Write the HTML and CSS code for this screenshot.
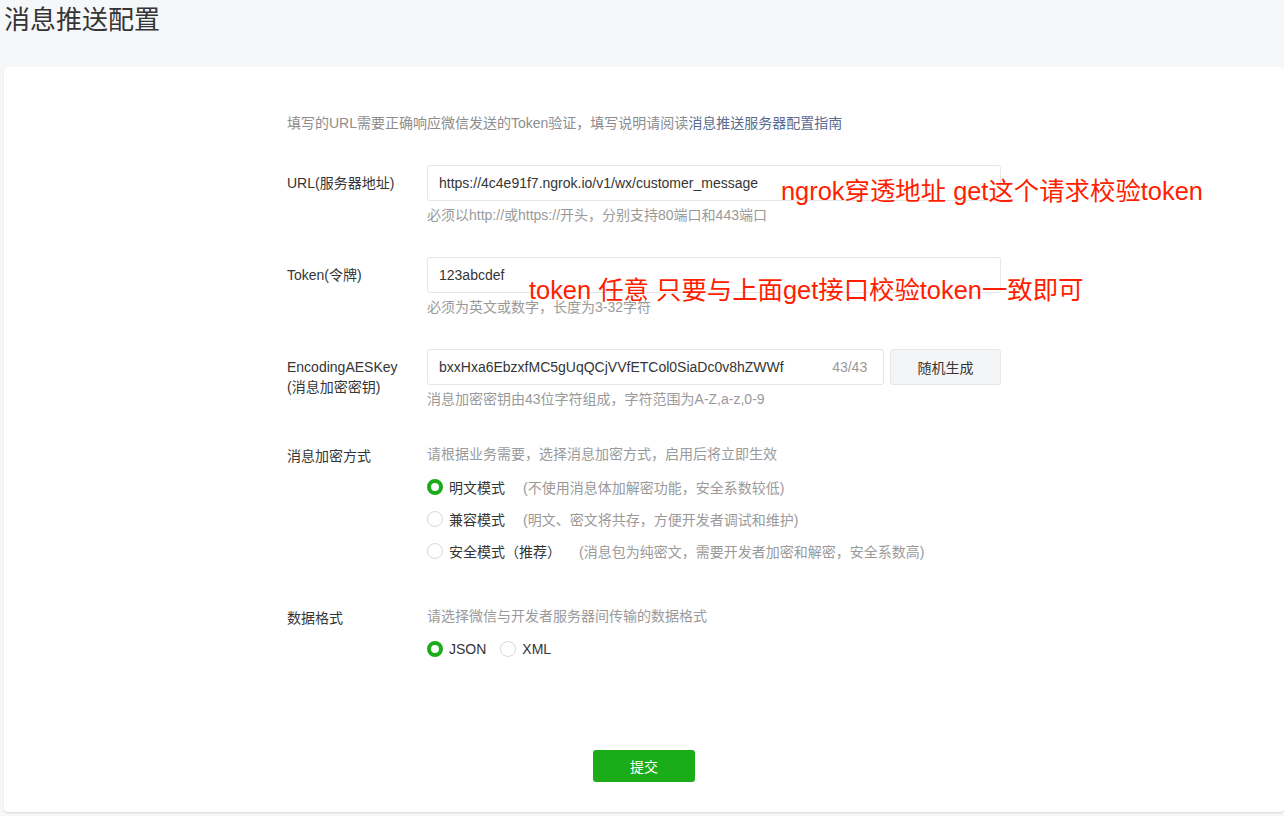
FILE: index.html
```html
<!DOCTYPE html>
<html lang="zh-CN">
<head>
<meta charset="utf-8">
<title>消息推送配置</title>
<link rel="stylesheet" href="styles.css">
</head>
<body>
<div class="page">
  <h1 class="title">消息推送配置</h1>
  <div class="card">
    <div class="form">
      <p class="intro">填写的URL需要正确响应微信发送的Token验证，填写说明请阅读<a class="link" href="#">消息推送服务器配置指南</a></p>

      <div class="row">
        <div class="label">URL(服务器地址)</div>
        <div class="control">
          <div class="input"><span class="value">https://4c4e91f7.ngrok.io/v1/wx/customer_message</span></div>
          <div class="hint">必须以http://或https://开头，分别支持80端口和443端口</div>
        </div>
      </div>

      <div class="row">
        <div class="label">Token(令牌)</div>
        <div class="control">
          <div class="input"><span class="value">123abcdef</span></div>
          <div class="hint">必须为英文或数字，长度为3-32字符</div>
        </div>
      </div>

      <div class="row row-key">
        <div class="label">EncodingAESKey<br>(消息加密密钥)</div>
        <div class="control">
          <div class="key-line">
            <div class="input input-key"><span class="value">bxxHxa6EbzxfMC5gUqQCjVVfETCol0SiaDc0v8hZWWf</span><span class="count">43/43</span></div>
            <button class="btn-gen" type="button">随机生成</button>
          </div>
          <div class="hint">消息加密密钥由43位字符组成，字符范围为A-Z,a-z,0-9</div>
        </div>
      </div>

      <div class="row row-radio">
        <div class="label">消息加密方式</div>
        <div class="control">
          <div class="desc">请根据业务需要，选择消息加密方式，启用后将立即生效</div>
          <div class="radio-group">
            <div class="radio-item"><span class="radio checked"></span><span class="radio-text">明文模式</span><span class="radio-desc">(不使用消息体加解密功能，安全系数较低)</span></div>
            <div class="radio-item"><span class="radio"></span><span class="radio-text">兼容模式</span><span class="radio-desc">(明文、密文将共存，方便开发者调试和维护)</span></div>
            <div class="radio-item"><span class="radio"></span><span class="radio-text">安全模式（推荐）</span><span class="radio-desc">(消息包为纯密文，需要开发者加密和解密，安全系数高)</span></div>
          </div>
        </div>
      </div>

      <div class="row row-radio row-format">
        <div class="label">数据格式</div>
        <div class="control">
          <div class="desc">请选择微信与开发者服务器间传输的数据格式</div>
          <div class="radio-group inline">
            <div class="radio-item"><span class="radio checked"></span><span class="radio-text">JSON</span></div>
            <div class="radio-item"><span class="radio"></span><span class="radio-text">XML</span></div>
          </div>
        </div>
      </div>
    </div>
    <div class="actions">
      <button class="btn-submit" type="button">提交</button>
    </div>
  </div>
  <div class="note note-url">ngrok穿透地址 get这个请求校验token</div>
  <div class="note note-token">token 任意 只要与上面get接口校验token一致即可</div>
</div>
</body>
</html>
```
FILE: styles.css
```css
html, body {
  margin: 0;
  padding: 0;
}
body {
  background: #f6f7f9;
  font-family: "Liberation Sans", "Noto Sans CJK SC", sans-serif;
  color: #353535;
  font-size: 14px;
}
.page {
  position: relative;
  width: 1284px;
  height: 816px;
  overflow: hidden;
}
.title {
  margin: 0;
  padding-left: 4px;
  height: 40px;
  line-height: 40px;
  font-size: 26px;
  font-weight: normal;
  color: #353535;
  margin-bottom: 27px;
}
.card {
  margin-left: 4px;
  width: 1280px;
  background: #fff;
  border-radius: 4px;
  box-shadow: 0 1px 2px rgba(0, 0, 0, 0.12);
  padding: 45px 0 30px;
  box-sizing: border-box;
}
.form {
  width: 714px;
  margin: 0 auto;
}
.intro {
  margin: 0 0 31px;
  line-height: 22px;
  color: #8d8d8d;
}
.link {
  color: #576b95;
  text-decoration: none;
}
.row {
  display: grid;
  grid-template-columns: 140px 574px;
  margin-bottom: 31px;
}
.row-key {
  margin-bottom: 33px;
}
.label {
  line-height: 20px;
  padding-top: 8px;
  color: #353535;
}
.input {
  height: 36px;
  box-sizing: border-box;
  border: 1px solid #e4e6e9;
  border-radius: 3px;
  padding: 0 11px;
  display: flex;
  align-items: center;
  background: #fff;
  color: #353535;
}
.value {
  flex: 1;
  white-space: nowrap;
}
.count {
  color: #9a9a9a;
}
.key-line {
  display: flex;
  gap: 6px;
}
.input-key {
  width: 458px;
  padding-right: 16px;
}
.btn-gen {
  width: 111px;
  height: 36px;
  border: 1px solid #e4e6e9;
  border-radius: 3px;
  background: #f4f5f7;
  font: inherit;
  color: #353535;
  padding: 0;
}
.hint {
  margin-top: 3px;
  line-height: 22px;
  color: #9a9a9a;
}
.row-radio {
  margin-bottom: 38px;
}
.row-radio .label {
  padding-top: 3px;
}
.desc {
  line-height: 22px;
  color: #9a9a9a;
}
.radio-group {
  margin-top: 6px;
}
.radio-item {
  display: flex;
  align-items: center;
  height: 32px;
}
.radio-group.inline {
  display: flex;
  gap: 14px;
}
.radio {
  width: 16px;
  height: 16px;
  box-sizing: border-box;
  border: 1px solid #d9d9d9;
  border-radius: 50%;
  background: #fff;
  margin-right: 6px;
  flex: none;
}
.radio.checked {
  border: 4px solid #1aad19;
}
.radio-text {
  color: #353535;
}
.radio-desc {
  margin-left: 18px;
  color: #9a9a9a;
}
.row-format {
  margin-bottom: 85px;
}
.actions {
  display: flex;
  justify-content: center;
}
.btn-submit {
  width: 102px;
  height: 32px;
  border: 0;
  border-radius: 3px;
  background: #1aad19;
  color: #fff;
  font: inherit;
  font-size: 14px;
  padding: 0;
}
.note {
  position: absolute;
  font-size: 25.4px;
  line-height: 30px;
  color: #ff1e00;
  white-space: nowrap;
}
.note-url {
  left: 781px;
  top: 176px;
}
.note-token {
  left: 529px;
  top: 275px;
}
```
